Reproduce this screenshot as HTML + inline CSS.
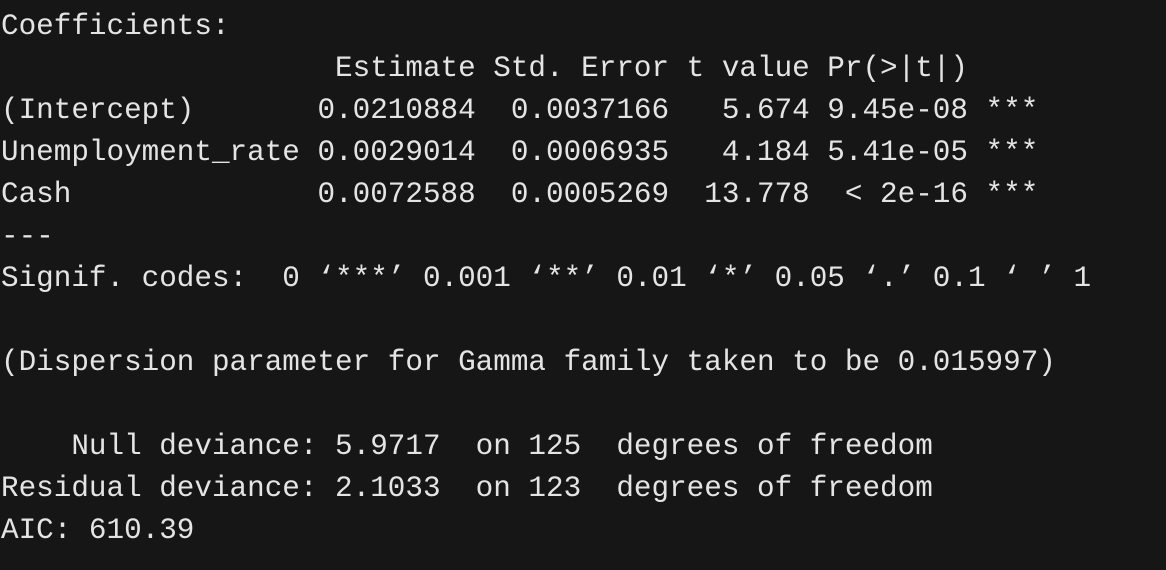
<!DOCTYPE html>
<html><head><meta charset="utf-8"><style>
html,body{margin:0;padding:0;background:#161616;width:1166px;height:570px;overflow:hidden}
pre{margin:0;position:absolute;left:1px;top:6px;font-family:"Liberation Mono","DejaVu Sans Mono",monospace;font-size:29.3px;line-height:42px;color:#e4e4e4;white-space:pre}
</style></head><body><pre>Coefficients:
                   Estimate Std. Error t value Pr(&gt;|t|)
(Intercept)       0.0210884  0.0037166   5.674 9.45e-08 ***
Unemployment_rate 0.0029014  0.0006935   4.184 5.41e-05 ***
Cash              0.0072588  0.0005269  13.778  &lt; 2e-16 ***
---
Signif. codes:  0 ‘***’ 0.001 ‘**’ 0.01 ‘*’ 0.05 ‘.’ 0.1 ‘ ’ 1

(Dispersion parameter for Gamma family taken to be 0.015997)

    Null deviance: 5.9717  on 125  degrees of freedom
Residual deviance: 2.1033  on 123  degrees of freedom
AIC: 610.39</pre></body></html>
